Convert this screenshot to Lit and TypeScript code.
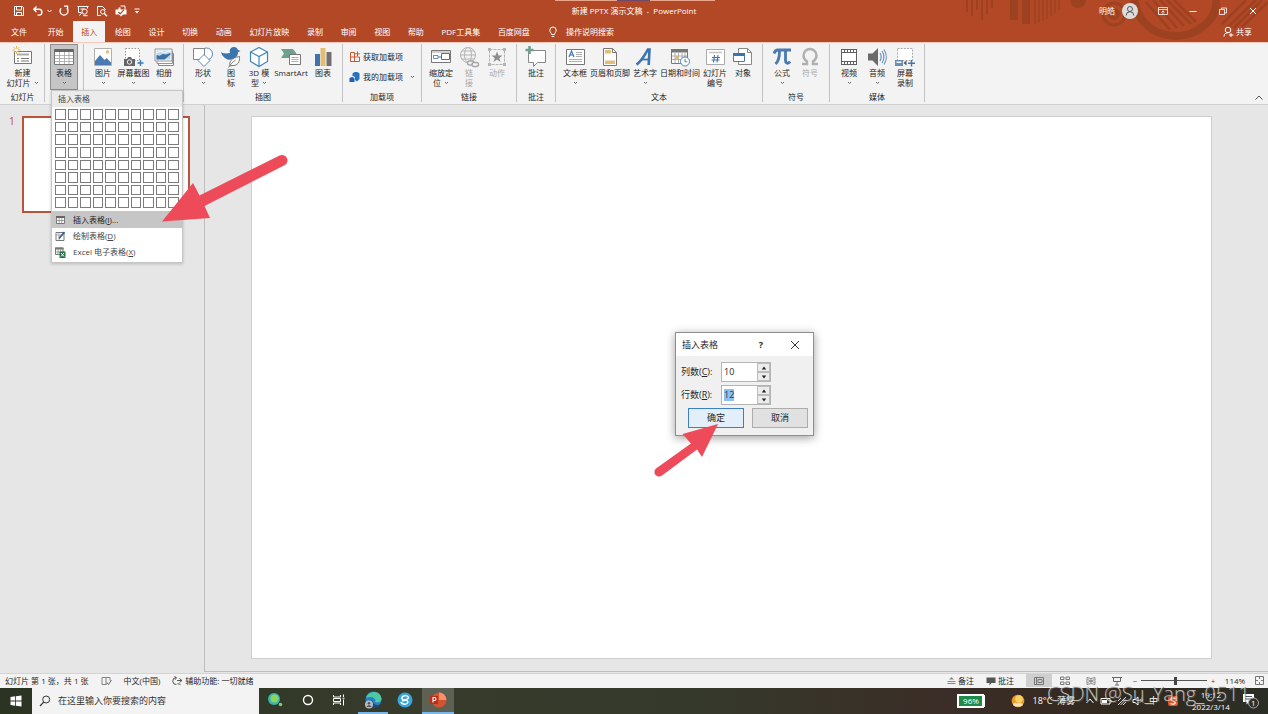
import { LitElement, html, svg, css, nothing, TemplateResult } from "lit";
import { customElement, property, state, query } from "lit/decorators.js";
import { classMap } from "lit/directives/class-map.js";

type Art = Record<string, { w: number; h: number; art: TemplateResult }>;

const box = (w: number, h: number, art: TemplateResult) => ({ w, h, art });

const art: Art = {
  save: box(12, 12, svg`<path d="M1.5 1.5h8l1 1v8h-9z M3.5 1.5v3.5h5V1.5 M3.5 10.5V7.5h5v3" fill="none" stroke="#fff"/>`),
  undo: box(12, 12, svg`<path d="M4.5 1.5L1.8 4.3l2.7 2.8 M2 4.3h5a2.9 2.9 0 0 1 0 5.8H5.5" fill="none" stroke="#fff" stroke-width="1.4"/>`),
  redo: box(12, 12, svg`<path d="M8.8 3.2A4 4 0 1 1 3.2 3.2" fill="none" stroke="#fff" stroke-width="1.3"/><path d="M6 1.2h3.6v3.6" fill="none" stroke="#fff" stroke-width="1.3"/>`),
  show: box(12, 12, svg`<path d="M.5 1.5h11 M1.5 1.5v6h3 M10.5 1.5v2 M3.5 4h4 M2.5 10.5l2-2.5" fill="none" stroke="#fff"/><circle cx="7.6" cy="6.6" r="2.6" fill="none" stroke="#fff"/><path d="M6.2 10.7h4.5" stroke="#fff"/>`),
  preview: box(12, 12, svg`<path d="M5 10.5H1.5v-9h5l2.5 2.5v1" fill="none" stroke="#fff"/><circle cx="6.8" cy="6.8" r="2.2" fill="none" stroke="#fff"/><path d="M8.4 8.4l2.6 2.8" stroke="#fff" stroke-width="1.4"/>`),
  printer: box(12, 12, svg`<path d="M.5 4.500h3V2.500h2v2h6v5H8l-2 2-2-2H.5z" fill="#fff"/><path d="M5.500 1h4.500v3.500" fill="none" stroke="#fff"/><path d="M3.400 7l1.800 1.800 3.600-4" fill="none" stroke="#b34827" stroke-width="1.200"/>`),
  more: box(6, 6, svg`<path d="M.5 1h5" stroke="#fff"/><path d="M.8 3h4.4L3 5.4z" fill="#fff"/>`),
  bulb: box(10, 12, svg`<path d="M3.5 8.5C3.5 7 1.8 6.300 1.800 4.200a3.200 3.200 0 0 1 6.400 0C8.200 6.300 6.500 7 6.500 8.500z M3.700 10.500h2.600" fill="none" stroke="#fff"/>`),
  person: box(16, 16, svg`<circle cx="8" cy="8" r="8" fill="#dcdcdc"/><circle cx="8" cy="6" r="2.500" fill="none" stroke="#555"/><path d="M4.200 12.500a3.800 3.800 0 0 1 7.600 0" fill="none" stroke="#555"/>`),
  ribbonOpt: box(10, 10, svg`<path d="M.5 1.500h9v7h-9z M.5 3.500h9 M5 8V5 M3.500 6.200L5 4.800l1.500 1.400" fill="none" stroke="#fff" stroke-width=".8"/>`),
  min: box(10, 10, svg`<path d="M1.500 5.500h7" stroke="#fff"/>`),
  restore: box(10, 10, svg`<path d="M1.500 3.500h5v5h-5z M3.500 3.500v-1.500h5v5H6.500" fill="none" stroke="#fff" stroke-width=".8"/>`),
  closeW: box(10, 10, svg`<path d="M2 2l6 6M8 2l-6 6" stroke="#fff"/>`),
  share: box(11, 12, svg`<circle cx="5" cy="4" r="2.800" fill="none" stroke="#fff"/><path d="M1 10.500c0-2.500 1.500-3.700 4-3.700 M8 7v4 M6 9h4.500" fill="none" stroke="#fff"/>`),

  newSlide: box(22, 22, svg`<path d="M2.500 5.500h17v12h-17z" fill="#fff" stroke="#777"/><path d="M5 8.500h12" stroke="#aaa" stroke-width="2"/><path d="M5 12.500h2M9 12.500h8M5 15h2M9 15h8" stroke="#777"/><path d="M4.500 0v8M.5 4h8M1.700 1.200l5.600 5.600M7.300 1.200L1.700 6.800" stroke="#e6b75a"/><circle cx="4.500" cy="4" r="1.500" fill="#fff"/>`),
  table: box(22, 22, svg`<path d="M1.500 3.500h19v15h-19z" fill="#fff" stroke="#777"/><path d="M1.500 3h19v3h-19z" fill="#666"/><path d="M6.500 6v12M11.500 6v12M16 6v12M2 9.500h18M2 12.500h18M2 15.500h18" stroke="#999" stroke-width=".7"/>`),
  picture: box(22, 22, svg`<path d="M2.500 2.500h17v17h-17z" fill="#fff" stroke="#b0b0b0"/><path d="M3 19v-4l5-6 4.500 5 2-2 4.500 4.500V19z" fill="#4a7ab0"/><circle cx="15.500" cy="6" r="1.800" fill="#e3bd73"/>`),
  screenshot: box(22, 22, svg`<path d="M2.500 2.500h14v12h-14z" fill="#fff" stroke="#999" stroke-dasharray="1.500 1.500"/><path d="M1 13h3l1-2h3l1 2h3v7H1z" fill="#666"/><circle cx="6.500" cy="16" r="2.200" fill="#666" stroke="#eee"/><path d="M17.500 14v6M14.500 17h6" stroke="#3a78b8" stroke-width="1.400"/>`),
  album: box(22, 22, svg`<path d="M5.500 7.500h15v12h-15z" fill="#fff" stroke="#888"/><path d="M4 5.500h15.500v12H4z" fill="#fff" stroke="#888" stroke-width=".9"/><path d="M2 3h17v12H2z" fill="#fff" stroke="#888" stroke-width=".9"/><path d="M3.500 4.500h14v9h-14z" fill="#b7dbea"/><path d="M3.500 13.500V9l3 .8 3.500-1.800 3 .5 4.500-1.500v1.500l-6 5z" fill="#3f70a8"/><path d="M3.500 6.500l4-1 4 1 6-1.500" fill="none" stroke="#fff"/>`),
  shapes: box(22, 22, svg`<circle cx="14.500" cy="8" r="6" fill="#fff" stroke="#4a7ab0" stroke-width=".9"/><path d="M1.500 2.500h11v11h-11z" fill="#fff" stroke="#777" stroke-width=".9"/><path d="M12 8.500l6 6-6 6-6-6z" fill="#fff" stroke="#4a7ab0" stroke-width=".9"/>`),
  icons: box(22, 22, svg`<path d="M1 6c3 2 6 1.500 9 1C9 3.500 11 1 14 1c2.500 0 3.500 1.500 4 3l2.500 1-2.500 1.200C18 9 17 10 16 11c-3 3-8 4-11 1C3 10.500 1.500 8.500 1 6z" fill="#3c74b0"/><path d="M10 20c-1-4 1-8 9.500-9.500C20 16 17.500 20 12 19.500z" fill="#fff" stroke="#777"/><path d="M8.500 21.500c2-3 4-5.500 7-7.500" stroke="#777" fill="none"/>`),
  cube: box(22, 22, svg`<path d="M11 1.500l8.500 4.500v9.500L11 20.500l-8.500-5V6z" fill="#fff" stroke="#3c86b8" stroke-width="1.200"/><path d="M2.500 6l8.500 4.500L19.500 6M11 10.500v10" fill="none" stroke="#3c86b8" stroke-width="1.200"/>`),
  smartart: box(22, 22, svg`<path d="M1 3h12l3.500 4.500L13 12H1l3-4.500z" fill="#6fa08c"/><path d="M9.500 8.500h11v10h-11z" fill="#fff" stroke="#777"/><path d="M11.500 11.500h7M11.500 13.500h7M11.500 15.500h7" stroke="#999" stroke-width=".8"/>`),
  chart: box(22, 22, svg`<path d="M3 8h5v12H3z" fill="#3c74b0"/><path d="M8.500 2h5v18h-5z" fill="#e3bd73"/><path d="M14.500 6h5v14h-5z" fill="#707070"/>`),
  zoomNav: box(22, 22, svg`<path d="M1.500 4.500h19v12h-19z" fill="#fff" stroke="#777"/><path d="M2 5h18v2H2z" fill="#d0d0d0"/><path d="M11.500 7.500h8v6h-8z" fill="#fff" stroke="#3c74b0"/><path d="M3.500 9.500h4.500v3H3.500z" fill="none" stroke="#3c74b0" stroke-width=".8"/><path d="M8 11h3" stroke="#3c74b0"/>`),
  link: box(22, 22, svg`<g fill="none" stroke="#b4b4b4"><circle cx="10" cy="9" r="7.500"/><ellipse cx="10" cy="9" rx="3.500" ry="7.500"/><path d="M2.500 9h15M4 5h12M4 13h12"/></g><g fill="#f3f3f3" stroke="#a8a8a8" stroke-width="1.500"><rect x="9.500" y="15" width="6.500" height="4" rx="2"/><rect x="14" y="16.500" width="6.500" height="4" rx="2"/></g>`),
  action: box(22, 22, svg`<path d="M3.500 3.500h15v15h-15z" fill="none" stroke="#b4b4b4" stroke-dasharray="3 1"/><path d="M2 2h3v3H2zM17 2h3v3h-3zM2 17h3v3H2zM17 17h3v3h-3z" fill="#b4b4b4"/><path d="M11 5.500l1.500 4h4l-3.200 2.500 1.200 4-3.500-2.400L7.500 16l1.200-4L5.500 9.500h4z" fill="#8c8c8c"/>`),
  comment: box(22, 22, svg`<path d="M3.500 4.500h17v12h-8l-4 4v-4h-5z" fill="#fff" stroke="#888"/><path d="M4.500 0v8M.5 4h8" stroke="#6fa08c" stroke-width="2.600"/>`),
  textbox: box(22, 22, svg`<path d="M2.500 3.500h18v15h-18z" fill="#fff" stroke="#777"/><path d="M5 11l2.500-6L10 11M6 9h3" fill="none" stroke="#3c74b0" stroke-width="1.200"/><path d="M12 6.500h6M12 8.500h6M12 10.500h6M5 13.500h13M5 15.500h13" stroke="#999" stroke-width=".8"/>`),
  header: box(22, 22, svg`<path d="M4.500 2.500h9l4 4v13h-13z" fill="#fff" stroke="#777"/><path d="M6 4h6v3.500H6zM6 14.500h10V18H6z" fill="#e3bd73"/><path d="M13.500 2.500v4h4" fill="none" stroke="#777"/>`),
  wordart: box(22, 22, svg`<path d="M2.500 18.500C7 16 11 8.500 14 3.500h1.500l-.8 15.500" fill="none" stroke="#3c74b0" stroke-width="2.600"/><path d="M7.500 13.500h7" stroke="#3c74b0" stroke-width="1.800"/>`),
  date: box(22, 22, svg`<path d="M2.500 3.500h16v14h-16z" fill="#fff" stroke="#777"/><path d="M2 3h17v3.500H2z" fill="#777"/><path d="M6 7v10M9.500 7v10M13 7v10M16 7v10M3 10h15M3 13.500h15" stroke="#999" stroke-width=".8"/><path d="M6 10h3.500v3.500H6z" fill="#e3bd73"/><circle cx="16" cy="15.500" r="4.500" fill="#fff" stroke="#4a86b8"/><path d="M16 12.800v3h2.300" fill="none" stroke="#4a86b8"/>`),
  number: box(22, 22, svg`<path d="M2.500 3.500h18v15h-18z" fill="#fff" stroke="#aaa"/><path d="M5 6.500h13" stroke="#c4c4c4" stroke-width="1.500"/><path d="M10.500 9l-1 7.500M14 9l-1 7.500M8 11.500h8M7.500 14h8" stroke="#3c74b0" stroke-width="1.100"/>`),
  object: box(22, 22, svg`<path d="M6.500 2.500h9l4 4v12h-13z" fill="#fff" stroke="#888"/><path d="M15.500 2.500v4h4" fill="none" stroke="#888"/><path d="M1.500 7.500h11v8h-11z" fill="#fff" stroke="#4a7ab0"/><path d="M1 7h12v3H1z" fill="#3c74b0"/>`),
  pi: box(22, 22, svg`<path d="M3 7.500C4 4.500 5 4 7 4h13" fill="none" stroke="#4a7ab0" stroke-width="2.800"/><path d="M8.500 5c0 6-.5 10-4 13" fill="none" stroke="#4a7ab0" stroke-width="2.800"/><path d="M14.500 5v9c0 4 3 4 4.500 1.500" fill="none" stroke="#4a7ab0" stroke-width="2.800"/>`),
  omega: box(22, 22, svg`<path d="M3 18h5v-2.500C5.500 14 4.500 12 4.500 9.500a6.500 6.500 0 0 1 13 0c0 2.500-1 4.500-3.500 6V18h5" fill="none" stroke="#b0b0b0" stroke-width="2.400"/>`),
  video: box(22, 22, svg`<path d="M3 3h16v16H3z" fill="#606060"/><path d="M4 7h14v8H4z" fill="#fff"/><path d="M4 5h14M4 17h14" stroke="#fff" stroke-width="1.800" stroke-dasharray="2 1"/>`),
  audio: box(22, 22, svg`<path d="M2 7.500h4.500L12 2v18l-5.500-5.500H2z" fill="#6a6a6a"/><path d="M14 7c1.500 2.500 1.500 5.500 0 8M16 5c2.500 3.500 2.500 8.500 0 12M18 3.500c3 4.500 3 10.500 0 15" fill="none" stroke="#5a8cc0" stroke-width="1.100"/>`),
  record: box(22, 22, svg`<path d="M3.500 2.500h15v12h-15z" fill="#fff" stroke="#aaa" stroke-dasharray="2 1.200"/><path d="M1 14h8v6H1z" fill="#6a8fb5"/><path d="M2.500 15.500h5v1.500h-5z" fill="#fff"/><path d="M9.500 17l3-2.500v5z" fill="#555"/><path d="M17.500 14v6.500M14 17.200h7" stroke="#3a78b8" stroke-width="1.400"/>`),
  getAddin: box(12, 12, svg`<path d="M1.500 1.500h4v9h-4zM1.500 6h9v4.500h-9" fill="none" stroke="#c65a34"/><path d="M8.500 .5v4.500M6.200 2.800h4.600" stroke="#c65a34"/>`),
  myAddin: box(12, 12, svg`<path d="M3.500 2.500C5 .5 9 .5 10.500 2.500v5.500L8 10.500 6 9V6L3.500 5z" fill="#2573c4"/><path d="M.5 7l2.500-1 2.500 1v4H.5z" fill="#1d63b0"/>`),

  menuTable: box(10, 10, svg`<path d="M1 1.500h8v7H1z" fill="#fff" stroke="#777"/><path d="M.5 1h9v2h-9z" fill="#666"/><path d="M3.700 3v5.500M6.300 3v5.500M1 5.500h8" stroke="#888" stroke-width=".8"/>`),
  menuDraw: box(10, 10, svg`<path d="M.5 1.500h8v8h-8z" fill="#fff" stroke="#777"/><path d="M1 4h7M3.500 2v7" stroke="#999" stroke-width=".8"/><path d="M3.500 7.500L9 1" stroke="#2f5f96" stroke-width="1.700"/>`),
  menuExcel: box(11, 11, svg`<path d="M.5 1h7.500v6.500H.5z" fill="#fff" stroke="#777"/><path d="M0 .5h8.500v2H0z" fill="#777"/><path d="M3 2v5.500M5.500 2v5.500M.5 5h7.500" stroke="#888" stroke-width=".8"/><path d="M4.500 4.500h6v6.500h-6z" fill="#1d7a48"/><path d="M6 6l3 3.500M9 6L6 9.500" stroke="#fff"/>`),

  spell: box(11, 10, svg`<path d="M5 8.500H1v-7h4v7l1.500-1M5 1.500h4v3" fill="none" stroke="#777" stroke-width=".9"/><path d="M6 6.500L7.500 8.500 10.500 4" fill="none" stroke="#666"/>`),
  access: box(11, 10, svg`<path d="M4 1.500A3.500 3.500 0 0 0 4.500 8.500M2.500 .5L4.500 1.700 3 3.800M5 4.500h4.500M7.500 2.500l2.500 2-2.500 2M5.500 7.500l3 1" fill="none" stroke="#444" stroke-width=".9"/>`),
  notes: box(9, 10, svg`<path d="M4.500 1L7 3.500H2z" fill="#888"/><path d="M.5 5.500h8M.5 7.500h8" stroke="#888"/>`),
  bubble: box(10, 10, svg`<path d="M.5 1.500h9v5.500h-4l-2 2.500v-2.500h-3z" fill="#555"/>`),
  vNormal: box(10, 10, svg`<path d="M.5 1.500h9v7h-9zM2.500 1.500v7M4 3.500h4v3H4z" fill="none" stroke="#777"/>`),
  vSort: box(10, 10, svg`<path d="M.5 1h3.500v2.500H.5zM6 1h3.500v2.500H6zM.5 6h3.500v2.500H.5zM6 6h3.500v2.500H6z" fill="none" stroke="#777"/>`),
  vRead: box(10, 10, svg`<path d="M1 1.500l4 1 4-1v7l-4-1-4 1zM5 2.500v5M1.500 3.500l7 3M8.500 3.500l-7 3" fill="none" stroke="#777" stroke-width=".8"/>`),
  vShow: box(10, 10, svg`<path d="M0 1.500h10M1.500 1.500v4h7v-4M5 5.500v3M3 9h4" fill="none" stroke="#666"/>`),
  fit: box(9, 9, svg`<path d="M.5 .5h8v8h-8z" fill="none" stroke="#777"/><path d="M4.500 0v3M4.500 6v3M0 4.500h3M6 4.500h3" stroke="#777"/>`),

  win: box(12, 12, svg`<path d="M.5 2l4.700-.7v4.300H.5zM6 1.200L11.500.5v5.100H6zM.5 6.400h4.700v4.300L.5 10zM6 6.400h5.500v5.100L6 10.800z" fill="#fff"/>`),
  search: box(12, 12, svg`<circle cx="7.200" cy="4.500" r="3.500" fill="none" stroke="#333"/><path d="M4.700 7.200L1 11" stroke="#333" stroke-width="1.200"/>`),
  globe: box(16, 16, svg`<circle cx="7" cy="7" r="6" fill="#35b6ae"/><circle cx="7.500" cy="6.500" r="4" fill="#8ed45c"/><circle cx="13.500" cy="12.500" r="1.800" fill="#7dc77a"/>`),
  cortana: box(16, 16, svg`<circle cx="8" cy="8" r="4.500" fill="none" stroke="#fff" stroke-width="1.400"/>`),
  tasks: box(16, 16, svg`<path d="M1.500 3v2h7V3M1.500 13v-2h7v2M1.500 6.500h7v3h-7zM11.500 2.500v2.500M11.500 7.500v6M10.500 6.200h2" fill="none" stroke="#fff"/>`),
  edge: box(18, 18, svg`<circle cx="9.500" cy="8.500" r="8" fill="#2b7fc4"/><path d="M2 7C4-.5 16-1.500 17.500 7.500c.5 4-4 4.500-6.500 3.500C13 7 6 4.500 2 7z" fill="#4cc8a2"/><path d="M8 8c0 5 4 7 8 5.500-3 4-8 4-10 1.500z" fill="#174a86"/><circle cx="5" cy="13.500" r="4" fill="#b8bcc0"/><circle cx="5" cy="12.300" r="1.300" fill="#555"/><path d="M2.500 16c.5-2.500 4.500-2.500 5 0z" fill="#555"/>`),
  sogou: box(18, 18, svg`<circle cx="9" cy="9" r="7.500" fill="#38a5dc"/><path d="M12.800 6.800C12 4.800 9.800 4.500 8.300 4.800 6 5.200 5 7.300 6.500 8.300c1.400.9 4 .6 5 1.600 1.300 1.500-.5 3.400-2.700 3.400-1.800 0-3.200-.6-3.800-2.300M6 9.800c3 .6 5-1.500 6.800-3" fill="none" stroke="#fff" stroke-width="1.400"/>`),
  ppt: box(18, 18, svg`<circle cx="10" cy="9" r="7.500" fill="#d35230"/><path d="M10 1.500A7.500 7.500 0 0 1 17.500 9H10z" fill="#ff8f6b"/><path d="M1 5h8v8H1z" fill="#b7311a"/><path d="M4 11.500V6.500h1.500a1.500 1.500 0 0 1 0 3H4" fill="none" stroke="#fff" stroke-width="1.100"/>`),
  weather: box(14, 14, svg`<circle cx="7" cy="7" r="6.300" fill="#e99b2c"/><circle cx="8" cy="5" r="3.800" fill="#f9cf62"/><path d="M2 11c0-2.500 3-3 4-1.500C8 8 11 9 12 11c-3 2-7 2-10 0z" fill="#f4e3c4"/>`),
  up: box(10, 10, svg`<path d="M1.500 7L5 3l3.500 4" fill="none" stroke="#fff"/>`),
  power: box(12, 10, svg`<path d="M1 2.500h9v5.500H1z" fill="none" stroke="#fff"/><path d="M2 4h5v3H2z" fill="#fff"/><path d="M10.500 4h1v2.500h-1z" fill="#fff"/>`),
  wifi: box(10, 10, svg`<path d="M1 9L9 1M3.500 9L9 3.500M6 9l3-3M1 5l3-3" stroke="#ddd" fill="none"/>`),
  mute: box(12, 10, svg`<path d="M1 3.500h2L6 1v8L3 6.500H1z" fill="none" stroke="#fff"/><path d="M8 3.500l3 3M11 3.500l-3 3" stroke="#fff"/>`),
  ime: box(10, 10, svg`<rect width="10" height="10" rx="2" fill="#e4562a"/><path d="M7.500 2.500C4 1.500 2.500 3 3 4s4.500 1 4.200 2.800S4 8.500 2.500 7.500" fill="none" stroke="#fff" stroke-width="1.300"/>`),
  note: box(20, 18, svg`<path d="M2 2h11v8H8l-2.500 2.500V10H2z" fill="#fff"/><path d="M4 4.500h7M4 7h7" stroke="#555"/><circle cx="12.500" cy="11" r="5" fill="#2f3128" stroke="#aaa"/>`),
};

const icon = (name: string) => {
  const a = art[name];
  return html`<svg width=${a.w} height=${a.h} viewBox="0 0 ${a.w} ${a.h}" aria-hidden="true">${a.art}</svg>`;
};

const caret = html`<svg class="caret" width="5" height="4" viewBox="0 0 5 4" aria-hidden="true"><path d="M1 1L2.500 2.500 4 1" fill="none" stroke="#666"/></svg>`;

interface Tool {
  icon: string;
  lines: string[];
  size?: "mid" | "snug" | "wide";
  drop?: boolean;
  off?: boolean;
  on?: boolean;
}

interface Group {
  name: string;
  tools: Tool[];
  stacked?: boolean;
}

const groups: Group[] = [
  { name: "幻灯片", tools: [{ icon: "newSlide", lines: ["新建", "幻灯片"], size: "snug", drop: true }] },
  { name: "", tools: [{ icon: "table", lines: ["表格"], drop: true, on: true }] },
  {
    name: "",
    tools: [
      { icon: "picture", lines: ["图片"], drop: true },
      { icon: "screenshot", lines: ["屏幕截图"], size: "snug", drop: true },
      { icon: "album", lines: ["相册"], drop: true },
    ],
  },
  {
    name: "插图",
    tools: [
      { icon: "shapes", lines: ["形状"], drop: true },
      { icon: "icons", lines: ["图", "标"] },
      { icon: "cube", lines: ["3D 模", "型"], drop: true },
      { icon: "smartart", lines: ["SmartArt"], size: "mid" },
      { icon: "chart", lines: ["图表"] },
    ],
  },
  {
    name: "加载项",
    stacked: true,
    tools: [
      { icon: "getAddin", lines: ["获取加载项"] },
      { icon: "myAddin", lines: ["我的加载项"], drop: true },
    ],
  },
  {
    name: "链接",
    tools: [
      { icon: "zoomNav", lines: ["缩放定", "位"], drop: true },
      { icon: "link", lines: ["链", "接"], off: true },
      { icon: "action", lines: ["动作"], off: true },
    ],
  },
  { name: "批注", tools: [{ icon: "comment", lines: ["批注"] }] },
  {
    name: "文本",
    tools: [
      { icon: "textbox", lines: ["文本框"], drop: true },
      { icon: "header", lines: ["页眉和页脚"], size: "wide" },
      { icon: "wordart", lines: ["艺术字"], drop: true },
      { icon: "date", lines: ["日期和时间"], size: "wide" },
      { icon: "number", lines: ["幻灯片", "编号"] },
      { icon: "object", lines: ["对象"] },
    ],
  },
  {
    name: "符号",
    tools: [
      { icon: "pi", lines: ["公式"], drop: true },
      { icon: "omega", lines: ["符号"], off: true },
    ],
  },
  {
    name: "媒体",
    tools: [
      { icon: "video", lines: ["视频"], drop: true },
      { icon: "audio", lines: ["音频"], drop: true },
      { icon: "record", lines: ["屏幕", "录制"] },
    ],
  },
];

const reset = css`
  :host {
    display: block;
    font: 8px/10px "Open Sans", "Noto Sans CJK SC", sans-serif;
    color: #262626;
  }
  * {
    box-sizing: border-box;
  }
  button,
  input {
    font: inherit;
    color: inherit;
    background: none;
    border: 0;
    padding: 0;
    margin: 0;
  }
  svg {
    display: block;
    flex: none;
  }
`;

@customElement("title-bar")
class TitleBar extends LitElement {
  static styles = [
    reset,
    css`
      :host {
        position: relative;
        background: #b34827;
        color: #fff;
      }
      .swirl {
        position: absolute;
        right: 0;
        top: 0;
      }
      .edge {
        position: absolute;
        top: 0;
        left: 50%;
        width: 160px;
        height: 1px;
        margin-left: -79px;
        background: linear-gradient(to right, #eba58d 62px, #70486a 62px 95px, #eba58d 95px);
      }
      .top {
        position: relative;
        display: grid;
        grid-template-columns: 1fr auto 1fr;
        align-items: center;
        height: 21px;
      }
      .quick {
        display: flex;
        align-items: center;
        padding-left: 13px;
      }
      .quick button {
        margin-right: 7px;
      }
      .quick .tight {
        margin-right: 3px;
      }
      .quick .caret-w {
        margin-right: 6px;
      }
      .title {
        white-space: pre;
      }
      .win {
        display: flex;
        justify-content: flex-end;
        align-items: center;
        padding-right: 10px;
      }
      .user {
        display: flex;
        align-items: center;
        gap: 7px;
      }
      .win > button {
        margin-left: 20px;
      }
      .tabs {
        position: relative;
        display: flex;
        align-items: center;
        height: 21px;
      }
      nav {
        display: flex;
        justify-content: space-between;
        width: 535px;
        margin-left: 3px;
        height: 21px;
      }
      nav a {
        padding: 0 8px;
        line-height: 21px;
        color: #fff;
        text-decoration: none;
        white-space: nowrap;
      }
      nav a:first-child {
        margin-right: 3px;
      }
      nav .current {
        background: #f3f3f3;
        color: #b7472a;
      }
      .tell {
        display: flex;
        align-items: center;
        gap: 8px;
        margin-left: 10px;
      }
      .share {
        display: flex;
        align-items: center;
        gap: 2px;
        margin-left: auto;
        padding-right: 16px;
      }
    `,
  ];

  render() {
    const tabs = ["文件", "开始", "插入", "绘图", "设计", "切换", "动画", "幻灯片放映", "录制", "审阅", "视图", "帮助", "PDF工具集", "百度网盘"];
    return html`
      <svg class="swirl" width="308" height="42" viewBox="0 0 308 42" aria-hidden="true">
        <g stroke="#96401f" opacity=".75" fill="none">
          <path d="M7 0v12M12 0v16M17 0v10M22 0v20M27 0v14M32 0v8" stroke-width="2"/>
          <path d="M54 0v20M66 0v24" stroke-width="8"/>
          <path d="M75 0v24M79 0v23M83 0v21M87 0v19M91 0v16M95 0v13M99 0v9" stroke-width="1.500"/>
          <circle cx="118" cy="0" r="4" stroke-width="8"/>
          <circle cx="154" cy="14" r="11" stroke-width="3"/>
          <circle cx="154" cy="14" r="4" stroke-width="4"/>
          <path d="M174 0c4 24 22 36 42 36s42-16 40-36" stroke-width="8"/>
          <path d="M186 2l24 28M193 0l24 28M200 0l24 26M207 0l24 24M214 0l22 22" stroke-width="2.500"/>
          <path d="M268 27L296 0M274 28L302 0M282 27L308 2M262 24L286 0" stroke-width="2.500"/>
        </g>
      </svg>
      <span class="edge"></span>
      <div class="top">
        <div class="quick">
          <button aria-label="保存">${icon("save")}</button>
          <button class="tight" aria-label="撤消">${icon("undo")}</button>
          <svg class="caret-w" width="5" height="4" viewBox="0 0 5 4"><path d="M.5 1l2 2 2-2" fill="none" stroke="#fff"/></svg>
          <button aria-label="重做">${icon("redo")}</button>
          <button aria-label="放映">${icon("show")}</button>
          <button aria-label="预览">${icon("preview")}</button>
          <button aria-label="打印">${icon("printer")}</button>
          <button aria-label="更多">${icon("more")}</button>
        </div>
        <div class="title">新建 PPTX 演示文稿  -  PowerPoint</div>
        <div class="win">
          <span class="user">明皓 ${icon("person")}</span>
          <button aria-label="功能区显示选项">${icon("ribbonOpt")}</button>
          <button aria-label="最小化">${icon("min")}</button>
          <button aria-label="还原">${icon("restore")}</button>
          <button aria-label="关闭">${icon("closeW")}</button>
        </div>
      </div>
      <div class="tabs">
        <nav>
          ${tabs.map((t) => html`<a href="#" class=${classMap({ current: t === "插入" })}>${t}</a>`)}
        </nav>
        <button class="tell">${icon("bulb")}操作说明搜索</button>
        <button class="share">${icon("share")}共享</button>
      </div>
    `;
  }
}

@customElement("ribbon-bar")
class RibbonBar extends LitElement {
  static styles = [
    reset,
    css`
      :host {
        background: #f3f3f3;
        border-top: 1px solid #f6c9b9;
        border-bottom: 1px solid #d0d0d0;
      }
      .row {
        display: flex;
        padding: 1px 0 2px;
      }
      .group {
        display: flex;
        flex-direction: column;
        padding: 0 5px;
        border-right: 1px solid #c2c2c2;
      }
      .group:first-child {
        padding-left: 6px;
      }
      .tools {
        display: flex;
        height: 46px;
      }
      .tool {
        display: flex;
        flex-direction: column;
        align-items: center;
        width: 28px;
        height: 46px;
        padding-top: 1px;
        border: 1px solid transparent;
        white-space: nowrap;
      }
      .tool.snug {
        width: 33px;
      }
      .tool.mid {
        width: 36px;
      }
      .tool.wide {
        width: 42px;
      }
      .tool.on {
        background: #c5c5c5;
        border-color: #8f8f8f;
      }
      .tool.off {
        color: #a8a8a8;
      }
      .line {
        display: flex;
        align-items: center;
        justify-content: center;
        gap: 3px;
        height: 10px;
      }
      .stack {
        display: flex;
        flex-direction: column;
        gap: 8px;
        width: 68px;
        height: 46px;
        padding-top: 7px;
      }
      .small {
        display: flex;
        align-items: center;
        gap: 2px;
        height: 12px;
        padding-left: 1px;
        white-space: nowrap;
      }
      .small .caret {
        margin-left: 5px;
      }
      .name {
        height: 10px;
        margin-top: 2px;
        text-align: center;
        white-space: nowrap;
      }
      .fold {
        margin: auto 4px 0 auto;
      }
    `,
  ];

  private tool(t: Tool) {
    const cls = { tool: true, on: !!t.on, off: !!t.off, [t.size ?? "base"]: true };
    const second = t.lines[1];
    return html`
      <button class=${classMap(cls)} ?disabled=${!!t.off}>
        ${icon(t.icon)}
        <span class="line">${t.lines[0]}</span>
        <span class="line">${second ?? nothing}${t.drop ? caret : nothing}</span>
      </button>
    `;
  }

  render() {
    return html`
      <div class="row">
        ${groups.map(
          (g) => html`
            <section class="group">
              ${g.stacked
                ? html`<div class="stack">
                    ${g.tools.map((t) => html`<button class="small">${icon(t.icon)}<span>${t.lines[0]}</span>${t.drop ? caret : nothing}</button>`)}
                  </div>`
                : html`<div class="tools">${g.tools.map((t) => this.tool(t))}</div>`}
              <div class="name">${g.name}</div>
            </section>
          `
        )}
        <button class="fold" aria-label="折叠功能区">
          <svg width="10" height="8" viewBox="0 0 10 8"><path d="M1.500 5.500L5 2l3.500 3.500" fill="none" stroke="#555"/></svg>
        </button>
      </div>
    `;
  }
}

@customElement("table-menu")
class TableMenu extends LitElement {
  static styles = [
    reset,
    css`
      :host {
        width: 132px;
        background: #fff;
        border: 1px solid #c6c6c6;
        box-shadow: 0 1px 3px rgba(0, 0, 0, 0.2);
        color: #444;
      }
      .head {
        height: 16px;
        padding-left: 6px;
        line-height: 16px;
        background: #ebebeb;
      }
      .grid {
        display: grid;
        grid-template-columns: repeat(10, 1fr);
        grid-auto-rows: 1fr;
        gap: 2px;
        height: 99px;
        margin: 2px 3px 3px;
      }
      .cell {
        border: 1px solid #7c7c7c;
      }
      .item {
        display: flex;
        align-items: center;
        gap: 7px;
        width: 100%;
        height: 16px;
        padding-left: 3px;
      }
      .item:last-child {
        margin-bottom: 2px;
      }
      .item svg {
        width: 11px;
      }
      .item.on {
        height: 17px;
        background: #c6c6c6;
        color: #222;
      }
    `,
  ];

  render() {
    return html`
      <div class="head">插入表格</div>
      <div class="grid">${Array.from({ length: 80 }, () => html`<button class="cell" tabindex="-1"></button>`)}</div>
      <button class="item on">${icon("menuTable")}<span>插入表格(<u>I</u>)...</span></button>
      <button class="item">${icon("menuDraw")}<span>绘制表格(<u>D</u>)</span></button>
      <button class="item">${icon("menuExcel")}<span>Excel 电子表格(<u>X</u>)</span></button>
    `;
  }
}

@customElement("insert-dialog")
class InsertDialog extends LitElement {
  @state() private cols = 10;
  @state() private rows = 12;
  @query("#rows") private rowsBox!: HTMLInputElement;

  static styles = [
    reset,
    css`
      :host {
        width: 139px;
        background: #f0f0f0;
        border: 1px solid #8e8e8e;
        box-shadow: 0 2px 9px rgba(0, 0, 0, 0.38);
        font-size: 9px;
        line-height: 12px;
      }
      .bar {
        display: flex;
        align-items: center;
        height: 23px;
        padding: 0 13px 0 6px;
        background: #fff;
      }
      .bar span {
        flex: 1;
      }
      .bar button + button {
        margin-left: 27px;
      }
      .body {
        display: flex;
        flex-direction: column;
        gap: 3px;
        padding: 6px 5px 7px;
      }
      .field {
        display: flex;
        align-items: center;
      }
      .field label {
        width: 40px;
        white-space: nowrap;
      }
      .spin {
        display: flex;
        width: 50px;
        height: 20px;
        background: #fff;
        border: 1px solid #b4b4b4;
      }
      .spin input {
        width: 35px;
        padding-left: 2px;
        outline: 0;
      }
      .spin input::selection {
        background: #8cc0ee;
        color: #1c3c60;
      }
      .steps {
        display: flex;
        flex-direction: column;
        flex: 1;
      }
      .steps button {
        display: flex;
        flex: 1;
        align-items: center;
        justify-content: center;
        background: #ececec;
        border: 1px solid #bdbdbd;
      }
      .acts {
        display: flex;
        gap: 8px;
        padding-left: 7px;
      }
      .acts button {
        flex: 1;
        height: 20px;
        background: #e1e1e1;
        border: 1px solid #adadad;
      }
      .acts .ok {
        background: #e2eefa;
        border-color: #3c7fc8;
      }
    `,
  ];

  firstUpdated() {
    this.rowsBox.focus({ preventScroll: true });
    this.rowsBox.select();
  }

  private steps(change: (d: number) => void) {
    return html`<span class="steps">
      <button tabindex="-1" aria-label="增加" @click=${() => change(1)}>
        <svg width="6" height="4" viewBox="0 0 6 4"><path d="M3 .5L5.200 3.500H.8z" fill="#222"/></svg>
      </button>
      <button tabindex="-1" aria-label="减少" @click=${() => change(-1)}>
        <svg width="6" height="4" viewBox="0 0 6 4"><path d="M3 3.500L5.200 .5H.8z" fill="#222"/></svg>
      </button>
    </span>`;
  }

  render() {
    return html`
      <div class="bar">
        <span>插入表格</span>
        <button aria-label="帮助"><b>?</b></button>
        <button aria-label="关闭"><svg width="10" height="10" viewBox="0 0 10 10"><path d="M1 1l8 8M9 1L1 9" stroke="#333"/></svg></button>
      </div>
      <div class="body">
        <div class="field">
          <label for="cols">列数(<u>C</u>):</label>
          <span class="spin"><input id="cols" .value=${String(this.cols)} />${this.steps((d) => (this.cols += d))}</span>
        </div>
        <div class="field">
          <label for="rows">行数(<u>R</u>):</label>
          <span class="spin"><input id="rows" .value=${String(this.rows)} />${this.steps((d) => (this.rows += d))}</span>
        </div>
        <div class="acts">
          <button class="ok">确定</button>
          <button>取消</button>
        </div>
      </div>
    `;
  }
}

@customElement("status-bar")
class StatusBar extends LitElement {
  static styles = [
    reset,
    css`
      :host {
        display: flex;
        align-items: center;
        height: 15px;
        padding-bottom: 1px;
        background: #f3f3f3;
        border-top: 1px solid #d4d4d4;
        box-sizing: border-box;
        white-space: nowrap;
      }
      .left,
      .right {
        display: flex;
        align-items: center;
      }
      .left {
        gap: 12px;
        padding-left: 5px;
      }
      .pair {
        display: flex;
        align-items: center;
        gap: 2px;
      }
      .right {
        margin-left: auto;
        padding-right: 4px;
      }
      .right .pair {
        margin-right: 12px;
      }
      .view {
        display: flex;
        align-items: center;
        justify-content: center;
        width: 26px;
        height: 13px;
      }
      .view.on {
        background: #cfcfcf;
      }
      .sign {
        width: 10px;
        color: #555;
      }
      input {
        appearance: none;
        width: 66px;
        height: 9px;
        margin: 0 1px;
        background: linear-gradient(#555, #555) center / 100% 1px no-repeat;
      }
      input::-webkit-slider-thumb {
        appearance: none;
        width: 3px;
        height: 8px;
        background: #444;
      }
      .pct {
        width: 24px;
        margin: 0 8px 0 5px;
      }
    `,
  ];

  render() {
    return html`
      <div class="left">
        <span>幻灯片 第 1 张，共 1 张</span>
        ${icon("spell")}
        <span>中文(中国)</span>
        <span class="pair">${icon("access")}<span>辅助功能: 一切就绪</span></span>
      </div>
      <div class="right">
        <button class="pair">${icon("notes")}备注</button>
        <button class="pair">${icon("bubble")}批注</button>
        ${["vNormal", "vSort", "vRead", "vShow"].map(
          (v, i) => html`<button class=${classMap({ view: true, on: i === 0 })} aria-label="视图">${icon(v)}</button>`
        )}
        <button class="sign">−</button>
        <input type="range" aria-label="缩放" min="10" max="210" value="114" />
        <button class="sign">+</button>
        <button class="pct">114%</button>
        <button aria-label="适应窗口">${icon("fit")}</button>
      </div>
    `;
  }
}

@customElement("task-bar")
class TaskBar extends LitElement {
  static styles = [
    reset,
    css`
      :host {
        position: relative;
        display: flex;
        height: 26px;
        background: linear-gradient(to right, #2b3322, #363b2b 30%, #35392b 55%, #3b2d27 75%, #33291f 87%, #2b2e25);
        color: #fff;
      }
      .start {
        display: flex;
        align-items: center;
        justify-content: center;
        width: 32px;
      }
      .find {
        display: flex;
        align-items: center;
        gap: 7px;
        width: 227px;
        padding-left: 7px;
        background: #f3f3f3;
        color: #333;
      }
      .find input {
        flex: 1;
        font-size: 9px;
        outline: 0;
      }
      .find input::placeholder {
        color: #333;
      }
      .apps {
        display: flex;
        width: 195px;
      }
      .app {
        display: flex;
        flex: 1;
        align-items: center;
        justify-content: center;
        border-bottom: 2px solid transparent;
      }
      .app.open {
        border-image: linear-gradient(to right, transparent 10%, #76b9ed 10% 90%, transparent 90%) 2;
      }
      .app.front {
        background: #5c6153;
        border-color: #76b9ed;
      }
      .tray {
        display: flex;
        align-items: center;
        margin-left: auto;
        padding-right: 7px;
        font-size: 9px;
        line-height: 12px;
        white-space: nowrap;
      }
      .battery {
        width: 27px;
        height: 14px;
        margin-right: 27px;
        border: 2px solid #fff;
        background: #1f8a4c;
        font-size: 8px;
        line-height: 10px;
        text-align: center;
        box-shadow: 2px 0 0 -1px #fff;
      }
      .weather {
        display: flex;
        align-items: center;
        gap: 7px;
        margin-right: 10px;
      }
      .sys {
        display: flex;
        align-items: center;
        gap: 5px;
      }
      .sys span {
        margin-right: 5px;
      }
      .clock {
        width: 44px;
        margin: 0 8px 0 11px;
        font-size: 8px;
        text-align: center;
      }
      .notes {
        position: relative;
      }
      .count {
        position: absolute;
        left: 10px;
        top: 6px;
        font-size: 8px;
        line-height: 10px;
      }
      .mark {
        position: absolute;
        right: 18px;
        bottom: 9px;
        font-size: 20px;
        line-height: 22px;
        font-weight: 300;
        color: rgba(225, 225, 225, 0.8);
        text-shadow: 1px 1px 0 rgba(90, 90, 90, 0.7);
        white-space: nowrap;
        pointer-events: none;
      }
    `,
  ];

  render() {
    const apps = ["globe", "cortana", "tasks", "edge", "sogou", "ppt"];
    return html`
      <button class="start" aria-label="开始">${icon("win")}</button>
      <label class="find">${icon("search")}<input type="text" aria-label="搜索" placeholder="在这里输入你要搜索的内容" /></label>
      <div class="apps">
        ${apps.map((a) => html`<button class=${classMap({ app: true, open: a === "edge", front: a === "ppt" })} aria-label=${a}>${icon(a)}</button>`)}
      </div>
      <div class="tray">
        <span class="battery">96%</span>
        <span class="weather">${icon("weather")}<span>18°C&nbsp; 薄雾</span></span>
        <span class="sys">${icon("up")}${icon("power")}${icon("wifi")}${icon("mute")}<span>中</span>${icon("ime")}</span>
        <span class="clock">19:12<br />2022/3/14</span>
        <span class="notes">${icon("note")}<span class="count">1</span></span>
      </div>
      <span class="mark">CSDN @Su_Yang_0511</span>
    `;
  }
}

@customElement("app-root")
class AppRoot extends LitElement {
  @property({ type: Number }) slide = 1;

  static styles = [
    reset,
    css`
      :host {
        position: relative;
        display: flex;
        flex-direction: column;
        height: 100vh;
        overflow: hidden;
        background: #e6e6e6;
      }
      .work {
        flex: 1;
        display: flex;
        min-height: 0;
        margin-bottom: 1px;
      }
      .pane {
        display: flex;
        align-items: flex-start;
        gap: 7px;
        width: 205px;
        padding: 11px 14px 0 9px;
        border-right: 1px solid #bdbdbd;
        color: #bf4a28;
        font-size: 10px;
      }
      .thumb {
        flex: 1;
        height: 97px;
        background: #fff;
        border: 2px solid #b9533a;
      }
      .stage {
        flex: 1;
        display: flex;
        padding: 11px 56px 12px 46px;
        border-bottom: 1px solid #bdbdbd;
      }
      .slide {
        flex: 1;
        background: #fff;
        border: 1px solid #cfcfcf;
      }
      table-menu {
        position: absolute;
        left: 51px;
        top: 90px;
      }
      insert-dialog {
        position: absolute;
        left: 675px;
        top: 332px;
      }
      .arrow {
        position: absolute;
        pointer-events: none;
      }
      .a1 {
        left: 160px;
        top: 150px;
      }
      .a2 {
        left: 650px;
        top: 420px;
      }
    `,
  ];

  render() {
    return html`
      <title-bar></title-bar>
      <ribbon-bar></ribbon-bar>
      <div class="work">
        <aside class="pane"><span>${this.slide}</span><div class="thumb"></div></aside>
        <main class="stage"><div class="slide"></div></main>
      </div>
      <status-bar></status-bar>
      <task-bar></task-bar>
      <table-menu></table-menu>
      <insert-dialog></insert-dialog>
      <svg class="arrow a1" width="132" height="74" viewBox="0 0 132 74" aria-hidden="true">
        <path d="M2 71.500L33 33l6.500 12.500L119.500 5.500a5.500 5.500 0 0 1 5 9.800L44.500 56 50 68z" fill="#ee4b5a"/>
      </svg>
      <svg class="arrow a2" width="72" height="60" viewBox="0 0 72 60" aria-hidden="true">
        <path d="M68 4L32.500 14l8.500 9.500L6 48.500a4.500 4.500 0 0 0 6 7L47 29.500 52 37z" fill="#ee4b5a"/>
      </svg>
    `;
  }
}
